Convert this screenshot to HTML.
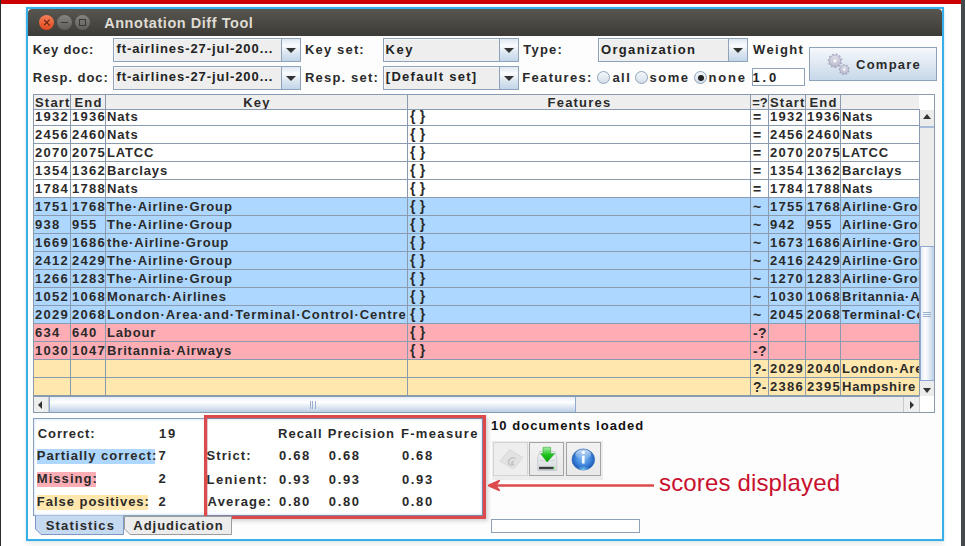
<!DOCTYPE html>
<html><head><meta charset="utf-8">
<style>
*{box-sizing:border-box;margin:0;padding:0}
html,body{width:965px;height:546px;overflow:hidden;background:#fff;position:relative;font-family:"Liberation Sans",sans-serif}
.a{position:absolute}
.t{position:absolute;white-space:pre;font-family:"Liberation Sans",sans-serif;line-height:1}
.combo{position:absolute;height:24px;border:1px solid #8ea3ba;background:#eeeeee;box-shadow:inset 1px 1px 0 #f8fafc}
.combo .arr{position:absolute;right:0;top:0;width:19px;height:22px;border-left:1px solid #8ea3ba;background:linear-gradient(#dfe8f2,#f9fbfd 30%,#dde7f1 60%,#c2d5e9)}
.combo .arr:after{content:"";position:absolute;left:3.5px;top:9px;border-left:5px solid transparent;border-right:5px solid transparent;border-top:5px solid #333}
.hdr .h{position:absolute;top:0;height:15px;border-right:1px solid #8a9bb0;border-bottom:1px solid #8a9bb0;text-align:center;font-size:13px;font-weight:bold;color:#2a2a2a;letter-spacing:1.2px;text-indent:1px;line-height:15px;white-space:pre}
.row{position:absolute;left:0;width:885px;height:18px;border-bottom:1px solid #8a9bb0;background:#fff}
.row.b{background:#add7ff}.row.p{background:#ffadb5}.row.y{background:#ffe7ad}
.row span{position:absolute;top:0;height:17px;border-right:1px solid #8a9bb0;padding-left:1px;font-size:13px;font-weight:bold;color:#2a2a2a;letter-spacing:0.75px;line-height:18px;white-space:pre;overflow:hidden}
.row .c1,.row .c2,.row .c6,.row .c7{letter-spacing:1.3px}
.row .c4{letter-spacing:4.3px;padding-left:2px;font-size:14px;line-height:16.5px}
.row .c3{letter-spacing:0.85px}
.row .c5{font-size:14px;line-height:19px;padding-left:2px;letter-spacing:0.3px}
.c1{left:0;width:37px}.c2{left:37px;width:35px}.c3{left:72px;width:302px}.c4{left:374px;width:343px}.c5{left:717px;width:18px}.c6{left:735px;width:37px}.c7{left:772px;width:35px}.row .c8{left:807px;width:120px;border-right:0}
.radio{width:13px;height:13px;border-radius:50%;border:1px solid #8ea3ba;background:linear-gradient(#f4f7fa,#d3deea)}
</style></head><body>
<div class="a" style="left:1px;top:0;width:960px;height:4px;background:#cc0000"></div>
<div class="a" style="left:961px;top:0;width:4px;height:546px;background:#45494b"></div>
<div class="a" style="left:0;top:0;width:1px;height:546px;background:#2a2e31"></div>

<div class="a" style="left:26px;top:7px;width:918px;height:534px;border:2px solid #3aaee6;background:#fdfdfd;box-shadow:0 0 1px #9dd8f5,0 4px 5px rgba(0,0,0,0.07)"></div>
<div class="a" style="left:28px;top:9px;width:914px;height:27px;background:linear-gradient(#58564f,#3c3b37);border-radius:4px 4px 0 0"></div>
<div class="a" style="left:39px;top:15px;width:15px;height:15px;border-radius:50%;background:linear-gradient(#f47e58,#e04a1e)"></div>
<div class="a" style="left:43px;top:22px;width:7.5px;height:1.2px;background:#5a2010;transform:rotate(45deg)"></div>
<div class="a" style="left:43px;top:22px;width:7.5px;height:1.2px;background:#5a2010;transform:rotate(-45deg)"></div>
<div class="a" style="left:57px;top:15px;width:15px;height:15px;border-radius:50%;background:linear-gradient(#85847f,#5e5d59)"></div>
<div class="a" style="left:61px;top:22px;width:7px;height:1px;background:#3a3935"></div>
<div class="a" style="left:75px;top:15px;width:15px;height:15px;border-radius:50%;background:linear-gradient(#85847f,#5e5d59)"></div>
<div class="a" style="left:79px;top:19px;width:7px;height:7px;border:1px solid #3a3935"></div>
<div class="t" style="left:104.2px;top:15.7px;font-size:14.5px;font-weight:700;letter-spacing:0.55px;color:#dfdbd2;">Annotation Diff Tool</div>

<div class="t" style="left:32.8px;top:42.9px;font-size:13px;font-weight:700;letter-spacing:0.82px;color:#2a2a2a;">Key doc:</div>
<div class="t" style="left:32.8px;top:71.1px;font-size:13px;font-weight:700;letter-spacing:0.96px;color:#2a2a2a;">Resp. doc:</div>
<div class="combo" style="left:113px;top:38px;width:188px"><div class="arr"></div></div>
<div class="combo" style="left:113px;top:66px;width:188px"><div class="arr"></div></div>
<div class="t" style="left:116.4px;top:42.1px;font-size:13px;font-weight:700;letter-spacing:0.93px;color:#222;">ft-airlines-27-jul-200...</div>
<div class="t" style="left:116.4px;top:70.1px;font-size:13px;font-weight:700;letter-spacing:0.93px;color:#222">ft-airlines-27-jul-200...</div>
<div class="t" style="left:305.0px;top:43.3px;font-size:13px;font-weight:700;letter-spacing:1.16px;color:#2a2a2a;">Key set:</div>
<div class="t" style="left:305.0px;top:71.2px;font-size:13px;font-weight:700;letter-spacing:1.18px;color:#2a2a2a;">Resp. set:</div>
<div class="combo" style="left:383px;top:38px;width:136px"><div class="arr"></div></div>
<div class="combo" style="left:383px;top:66px;width:136px"><div class="arr"></div></div>
<div class="t" style="left:385.5px;top:42.9px;font-size:13px;font-weight:700;letter-spacing:1.55px;color:#222;">Key</div>
<div class="t" style="left:385.8px;top:70.0px;font-size:13px;font-weight:700;letter-spacing:1.27px;color:#222">[Default set]</div>
<div class="t" style="left:523.3px;top:43.3px;font-size:13px;font-weight:700;letter-spacing:1.2px;color:#2a2a2a;">Type:</div>
<div class="t" style="left:522.3px;top:71.2px;font-size:13px;font-weight:700;letter-spacing:1.31px;color:#2a2a2a;">Features:</div>
<div class="combo" style="left:598px;top:38px;width:150px"><div class="arr"></div></div>
<div class="t" style="left:601.1px;top:42.9px;font-size:13px;font-weight:700;letter-spacing:1.3px;color:#222;">Organization</div>

<div class="a radio" style="left:597px;top:71px"></div>
<div class="t" style="left:612.4px;top:70.8px;font-size:13px;font-weight:700;letter-spacing:1.45px;color:#2a2a2a">all</div>
<div class="a radio" style="left:635px;top:71px"></div>
<div class="t" style="left:649.6px;top:70.8px;font-size:13px;font-weight:700;letter-spacing:1.45px;color:#2a2a2a">some</div>
<div class="a radio" style="left:694px;top:71px"><div class="a" style="left:2.5px;top:2.5px;width:6px;height:6px;border-radius:50%;background:#222"></div></div>
<div class="t" style="left:708.4px;top:70.8px;font-size:13px;font-weight:700;letter-spacing:1.88px;color:#2a2a2a">none</div>
<div class="t" style="left:753.0px;top:42.5px;font-size:13px;font-weight:700;letter-spacing:1.35px;color:#2a2a2a;">Weight</div>
<div class="a" style="left:752px;top:68px;width:53px;height:18px;border:1px solid #8ea3ba;background:#fff"></div>
<div class="t" style="left:752.5px;top:70.8px;font-size:13px;font-weight:700;letter-spacing:2.8px;color:#222;">1.0</div>
<div class="a" style="left:809px;top:47px;width:128px;height:34px;border:1px solid #8ea3ba;background:linear-gradient(#f6f8fb,#dfe8f2 50%,#c6d8ea)"></div>
<svg class="a" style="left:822px;top:48px" width="34" height="32" viewBox="822 48 34 32">
<defs><radialGradient id="gg" cx="50%" cy="40%" r="60%"><stop offset="0" stop-color="#f2f2f8"/><stop offset="1" stop-color="#a9a9c0"/></radialGradient></defs>
<path d="M848.22,70.41 L849.16,71.16 L848.73,72.16 L847.54,71.98 L846.75,72.81 L847.00,73.98 L846.02,74.47 L845.23,73.57 L844.10,73.70 L843.52,74.76 L842.47,74.50 L842.44,73.30 L841.49,72.67 L840.37,73.12 L839.72,72.24 L840.47,71.30 L840.15,70.21 L839.01,69.83 L839.07,68.75 L840.25,68.51 L840.70,67.46 L840.07,66.44 L840.82,65.65 L841.88,66.22 L842.90,65.71 L843.07,64.52 L844.15,64.40 L844.59,65.52 L845.70,65.78 L846.60,64.99 L847.50,65.59 L847.12,66.72 L847.80,67.64 L849.00,67.61 L849.31,68.65 L848.29,69.28Z" fill="url(#gg)" stroke="#9898b2" stroke-width="0.6"/>
<circle cx="844.2" cy="69.6" r="1.8" fill="#f6f6fb" stroke="#a8a8c0" stroke-width="0.5"/>
<path d="M840.49,61.91 L841.72,62.77 L841.28,63.89 L839.80,63.69 L839.02,64.70 L839.58,66.09 L838.61,66.79 L837.47,65.83 L836.27,66.25 L836.00,67.73 L834.80,67.80 L834.36,66.36 L833.12,66.07 L832.09,67.17 L831.05,66.58 L831.45,65.13 L830.57,64.22 L829.11,64.58 L828.55,63.52 L829.67,62.53 L829.42,61.28 L828.00,60.80 L828.10,59.61 L829.58,59.38 L830.05,58.19 L829.11,57.02 L829.84,56.07 L831.21,56.67 L832.25,55.92 L832.09,54.43 L833.22,54.03 L834.05,55.28 L835.32,55.21 L836.00,53.87 L837.16,54.14 L837.18,55.64 L838.29,56.27 L839.58,55.51 L840.42,56.37 L839.62,57.64 L840.22,58.77 L841.72,58.83 L841.95,60.00 L840.60,60.64Z" fill="url(#gg)" stroke="#9898b2" stroke-width="0.6"/>
<circle cx="835" cy="60.8" r="2.4" fill="#f6f6fb" stroke="#a8a8c0" stroke-width="0.6"/>
</svg>
<div class="t" style="left:856.0px;top:57.9px;font-size:13px;font-weight:700;letter-spacing:1.25px;color:#2a2a2a;">Compare</div>

<div class="a" style="left:33px;top:94px;width:902px;height:319px;border:1px solid #8a9bb0;background:#fff"></div>
<div class="a hdr" style="left:34px;top:95px;width:885px;height:15px;background:#eeeeee">
<span class="h" style="left:0;width:37px">Start</span><span class="h" style="left:37px;width:35px">End</span><span class="h" style="left:72px;width:302px">Key</span><span class="h" style="left:374px;width:343px">Features</span><span class="h" style="left:717px;width:18px;letter-spacing:0">=?</span><span class="h" style="left:735px;width:37px">Start</span><span class="h" style="left:772px;width:35px">End</span><span class="h" style="left:807px;width:78px;border-right:0"></span>
</div>
<div class="a" style="left:34px;top:110px;width:885px;height:286px;overflow:hidden">
<div class="row w" style="top:-2px"><span class="c1">1932</span><span class="c2">1936</span><span class="c3">Nats</span><span class="c4">{}</span><span class="c5">=</span><span class="c6">1932</span><span class="c7">1936</span><span class="c8">Nats</span></div>
<div class="row w" style="top:16px"><span class="c1">2456</span><span class="c2">2460</span><span class="c3">Nats</span><span class="c4">{}</span><span class="c5">=</span><span class="c6">2456</span><span class="c7">2460</span><span class="c8">Nats</span></div>
<div class="row w" style="top:34px"><span class="c1">2070</span><span class="c2">2075</span><span class="c3">LATCC</span><span class="c4">{}</span><span class="c5">=</span><span class="c6">2070</span><span class="c7">2075</span><span class="c8">LATCC</span></div>
<div class="row w" style="top:52px"><span class="c1">1354</span><span class="c2">1362</span><span class="c3">Barclays</span><span class="c4">{}</span><span class="c5">=</span><span class="c6">1354</span><span class="c7">1362</span><span class="c8">Barclays</span></div>
<div class="row w" style="top:70px"><span class="c1">1784</span><span class="c2">1788</span><span class="c3">Nats</span><span class="c4">{}</span><span class="c5">=</span><span class="c6">1784</span><span class="c7">1788</span><span class="c8">Nats</span></div>
<div class="row b" style="top:88px"><span class="c1">1751</span><span class="c2">1768</span><span class="c3">The·Airline·Group</span><span class="c4">{}</span><span class="c5">~</span><span class="c6">1755</span><span class="c7">1768</span><span class="c8">Airline·Group</span></div>
<div class="row b" style="top:106px"><span class="c1">938</span><span class="c2">955</span><span class="c3">The·Airline·Group</span><span class="c4">{}</span><span class="c5">~</span><span class="c6">942</span><span class="c7">955</span><span class="c8">Airline·Group</span></div>
<div class="row b" style="top:124px"><span class="c1">1669</span><span class="c2">1686</span><span class="c3">the·Airline·Group</span><span class="c4">{}</span><span class="c5">~</span><span class="c6">1673</span><span class="c7">1686</span><span class="c8">Airline·Group</span></div>
<div class="row b" style="top:142px"><span class="c1">2412</span><span class="c2">2429</span><span class="c3">The·Airline·Group</span><span class="c4">{}</span><span class="c5">~</span><span class="c6">2416</span><span class="c7">2429</span><span class="c8">Airline·Group</span></div>
<div class="row b" style="top:160px"><span class="c1">1266</span><span class="c2">1283</span><span class="c3">The·Airline·Group</span><span class="c4">{}</span><span class="c5">~</span><span class="c6">1270</span><span class="c7">1283</span><span class="c8">Airline·Group</span></div>
<div class="row b" style="top:178px"><span class="c1">1052</span><span class="c2">1068</span><span class="c3">Monarch·Airlines</span><span class="c4">{}</span><span class="c5">~</span><span class="c6">1030</span><span class="c7">1068</span><span class="c8">Britannia·Airways</span></div>
<div class="row b" style="top:196px"><span class="c1">2029</span><span class="c2">2068</span><span class="c3"><i style='font-style:normal;letter-spacing:0.97px'>London·Area·and·Terminal·Control·Centre</i></span><span class="c4">{}</span><span class="c5">~</span><span class="c6">2045</span><span class="c7">2068</span><span class="c8">Terminal·Control</span></div>
<div class="row p" style="top:214px"><span class="c1">634</span><span class="c2">640</span><span class="c3">Labour</span><span class="c4">{}</span><span class="c5">-?</span><span class="c6"></span><span class="c7"></span><span class="c8"></span></div>
<div class="row p" style="top:232px"><span class="c1">1030</span><span class="c2">1047</span><span class="c3">Britannia·Airways</span><span class="c4">{}</span><span class="c5">-?</span><span class="c6"></span><span class="c7"></span><span class="c8"></span></div>
<div class="row y" style="top:250px"><span class="c1"></span><span class="c2"></span><span class="c3"></span><span class="c4"></span><span class="c5">?-</span><span class="c6">2029</span><span class="c7">2040</span><span class="c8">London·Area</span></div>
<div class="row y" style="top:268px"><span class="c1"></span><span class="c2"></span><span class="c3"></span><span class="c4"></span><span class="c5">?-</span><span class="c6">2386</span><span class="c7">2395</span><span class="c8">Hampshire</span></div>
</div>
<div class="a" style="left:919px;top:109px;width:1px;height:287px;background:#8a9bb0"></div>
<div class="a" style="left:34px;top:109px;width:885px;height:1px;background:#8a9bb0"></div>
<div class="a" style="left:920px;top:110px;width:14px;height:286px;background:#ececec"></div>
<div class="a" style="left:923px;top:114px;border-left:4px solid transparent;border-right:4px solid transparent;border-bottom:5px solid #333"></div>
<div class="a" style="left:920px;top:126px;width:14px;height:2px;background:#a8bcd8"></div>
<div class="a" style="left:920px;top:246px;width:14px;height:135px;border-top:1px solid #8fa9d4;border-left:1px solid #8fa9d4;border-bottom:1px solid #8fa9d4;background:linear-gradient(90deg,#e6edf6,#ffffff 35%,#bccfe6)"></div>
<div class="a" style="left:923px;top:312px;width:8px;height:5px;border-top:1px solid #9bb0d0;border-bottom:1px solid #9bb0d0"></div>
<div class="a" style="left:923px;top:314px;width:8px;height:1px;background:#9bb0d0"></div>
<div class="a" style="left:923px;top:388px;border-left:4px solid transparent;border-right:4px solid transparent;border-top:5px solid #333"></div>
<div class="a" style="left:34px;top:396px;width:885px;height:16px;background:#ececec;border-top:1px solid #8a9bb0"></div>
<div class="a" style="left:34px;top:397px;width:15px;height:15px;background:#eeeeee;border-right:1px solid #c8c8c8"></div>
<div class="a" style="left:38px;top:401px;border-top:4px solid transparent;border-bottom:4px solid transparent;border-right:4px solid #333"></div>
<div class="a" style="left:49px;top:397px;width:527px;height:15px;border-left:1px solid #8fa9d4;border-right:1px solid #8fa9d4;background:linear-gradient(#e6edf6,#ffffff 35%,#bccfe6)"></div>
<div class="a" style="left:310px;top:401px;width:6px;height:8px;border-left:1px solid #9bb0d0;border-right:1px solid #9bb0d0"></div>
<div class="a" style="left:312px;top:401px;width:1px;height:8px;background:#9bb0d0"></div>
<div class="a" style="left:903px;top:397px;width:16px;height:15px;background:#eeeeee;border-left:1px solid #c8c8c8"></div>
<div class="a" style="left:910px;top:401px;border-top:4px solid transparent;border-bottom:4px solid transparent;border-left:4px solid #333"></div>
<div class="a" style="left:919px;top:396px;width:15px;height:16px;background:#fff;border-left:1px solid #c8c8c8"></div>

<div class="a" style="left:33px;top:418px;width:450px;height:98px;border:1px solid #8aa0c0;background:#fff;box-shadow:inset 0 0 3px #bcd6f2"></div>
<div class="a" style="left:37px;top:449px;width:118px;height:15px;background:#add7ff"></div>
<div class="a" style="left:37px;top:472px;width:59px;height:15px;background:#ffadb5"></div>
<div class="a" style="left:37px;top:495px;width:111px;height:15px;background:#ffe7ad"></div>
<div class="t" style="left:37.8px;top:426.7px;font-size:13px;font-weight:700;letter-spacing:0.89px;color:#2a2a2a;">Correct:</div>
<div class="t" style="left:36.8px;top:449.3px;font-size:13px;font-weight:700;letter-spacing:1.0px;color:#2a2a2a;">Partially correct:</div>
<div class="t" style="left:36.8px;top:471.9px;font-size:13px;font-weight:700;letter-spacing:1.05px;color:#2a2a2a;">Missing:</div>
<div class="t" style="left:36.8px;top:495.4px;font-size:13px;font-weight:700;letter-spacing:0.97px;color:#2a2a2a;">False positives:</div>
<div class="t" style="left:159.1px;top:426.7px;font-size:13px;font-weight:700;letter-spacing:3.45px;color:#2a2a2a"><span style="letter-spacing:1.6px">19</span></div>
<div class="t" style="left:158.6px;top:449.3px;font-size:13px;font-weight:700;letter-spacing:3.45px;color:#2a2a2a">7</div>
<div class="t" style="left:158.6px;top:471.9px;font-size:13px;font-weight:700;letter-spacing:3.45px;color:#2a2a2a">2</div>
<div class="t" style="left:158.6px;top:495.4px;font-size:13px;font-weight:700;letter-spacing:3.45px;color:#2a2a2a">2</div>
<div class="t" style="left:278.0px;top:426.7px;font-size:13px;font-weight:700;letter-spacing:1.05px;color:#2a2a2a;">Recall</div>
<div class="t" style="left:327.8px;top:426.7px;font-size:13px;font-weight:700;letter-spacing:0.95px;color:#2a2a2a;">Precision</div>
<div class="t" style="left:400.9px;top:426.7px;font-size:13px;font-weight:700;letter-spacing:1.34px;color:#2a2a2a;">F-measure</div>
<div class="t" style="left:206.6px;top:449.3px;font-size:13px;font-weight:700;letter-spacing:1.07px;color:#2a2a2a;">Strict:</div>
<div class="t" style="left:206.6px;top:472.8px;font-size:13px;font-weight:700;letter-spacing:1.38px;color:#2a2a2a;">Lenient:</div>
<div class="t" style="left:207.6px;top:495.4px;font-size:13px;font-weight:700;letter-spacing:1.16px;color:#2a2a2a;">Average:</div>
<div class="t" style="left:279.0px;top:449.3px;font-size:13px;font-weight:700;letter-spacing:1.65px;color:#2a2a2a;">0.68</div>
<div class="t" style="left:328.8px;top:449.3px;font-size:13px;font-weight:700;letter-spacing:1.65px;color:#2a2a2a">0.68</div>
<div class="t" style="left:401.9px;top:449.3px;font-size:13px;font-weight:700;letter-spacing:1.65px;color:#2a2a2a">0.68</div>
<div class="t" style="left:279.0px;top:472.8px;font-size:13px;font-weight:700;letter-spacing:1.65px;color:#2a2a2a">0.93</div>
<div class="t" style="left:328.8px;top:472.8px;font-size:13px;font-weight:700;letter-spacing:1.65px;color:#2a2a2a">0.93</div>
<div class="t" style="left:401.9px;top:472.8px;font-size:13px;font-weight:700;letter-spacing:1.65px;color:#2a2a2a">0.93</div>
<div class="t" style="left:279.0px;top:495.4px;font-size:13px;font-weight:700;letter-spacing:1.65px;color:#2a2a2a">0.80</div>
<div class="t" style="left:328.8px;top:495.4px;font-size:13px;font-weight:700;letter-spacing:1.65px;color:#2a2a2a">0.80</div>
<div class="t" style="left:401.9px;top:495.4px;font-size:13px;font-weight:700;letter-spacing:1.65px;color:#2a2a2a">0.80</div>
<div class="a" style="left:204px;top:415px;width:282px;height:104px;border:3px solid #dc4a4c;box-shadow:2px 2px 4px rgba(0,0,0,0.18),inset 0 0 0 1px rgba(120,40,60,0.25)"></div>

<svg class="a" style="left:28px;top:510px" width="210" height="30" viewBox="28 510 210 30">
<path d="M124.5 516.5H231.5V534.5H130L124.5 529Z" fill="#ececec" stroke="#9c9c9c" stroke-width="1"/>
<path d="M35.5 515.5V529L41 534.5H123.5V515.5" fill="#c5d9f1" stroke="#7b98c5" stroke-width="1"/>
</svg>

<div class="t" style="left:45.7px;top:519.0px;font-size:13px;font-weight:700;letter-spacing:1.16px;color:#2a2a2a;">Statistics</div>
<div class="t" style="left:133.3px;top:519.0px;font-size:13px;font-weight:700;letter-spacing:0.97px;color:#2a2a2a;">Adjudication</div>

<div class="t" style="left:490.9px;top:418.5px;font-size:13px;font-weight:700;letter-spacing:1.08px;color:#111;">10 documents loaded</div>
<div class="a" style="left:492px;top:441px;width:111px;height:39px;background:#ececec"></div>
<div class="a" style="left:493px;top:442px;width:35px;height:34px;border:1px solid #d4d4d4;background:#eeeeee"></div>
<div class="a" style="left:529px;top:442px;width:35px;height:34px;border:1px solid #a4a4a4;background:linear-gradient(#f2f2f2,#e8e8e8)"></div>
<div class="a" style="left:566px;top:442px;width:35px;height:34px;border:1px solid #a4a4a4;background:linear-gradient(#f2f2f2,#e8e8e8)"></div>
<svg class="a" style="left:494px;top:443px" width="34" height="33" viewBox="494 443 34 33">
<path d="M509.5 449.5L523 457.5L513.5 469L500 461Z" fill="#e2e2e2" stroke="#d6d6d6" stroke-width="0.8"/>
<path d="M515.5 459.2A4 3.3 -35 1 0 513.5 464.5L511.5 462.8L514 461" fill="none" stroke="#c4c4c4" stroke-width="1.5"/>
</svg>
<svg class="a" style="left:530px;top:443px" width="34" height="33" viewBox="530 443 34 33">
<defs><linearGradient id="dg" x1="0" y1="0" x2="0" y2="1"><stop offset="0" stop-color="#f4f6f8"/><stop offset="1" stop-color="#d4d8dc"/></linearGradient>
<linearGradient id="ag" x1="0" y1="0" x2="0" y2="1"><stop offset="0" stop-color="#a6f0a6"/><stop offset="0.5" stop-color="#22c422"/><stop offset="1" stop-color="#00a000"/></linearGradient></defs>
<path d="M539.5 451.5H554.8L556.8 458V470.5H537.7V458Z" fill="url(#dg)" stroke="#c2c6cc" stroke-width="0.8"/>
<path d="M539 460Q547 463 555 460" fill="none" stroke="#c8ccd2" stroke-width="0.8"/>
<rect x="539" y="466.8" width="15" height="2.4" fill="#3a3d42"/>
<rect x="553" y="467.2" width="1.6" height="1.6" fill="#44dd44"/>
<path d="M543 447.3H550.6V453.6H554.8L547.1 462L540.5 453.6H543Z" fill="url(#ag)" stroke="#1e9e1e" stroke-width="0.5"/>
</svg>
<svg class="a" style="left:566px;top:443px" width="35" height="33" viewBox="566 443 35 33">
<defs><radialGradient id="ig" cx="50%" cy="45%" r="55%"><stop offset="0" stop-color="#8cc0f4"/><stop offset="0.6" stop-color="#3f86dc"/><stop offset="1" stop-color="#1c56b0"/></radialGradient>
<linearGradient id="ih" x1="0" y1="0" x2="0" y2="1"><stop offset="0" stop-color="#ffffff" stop-opacity="0.75"/><stop offset="1" stop-color="#ffffff" stop-opacity="0"/></linearGradient>
<radialGradient id="ib" cx="50%" cy="100%" r="50%"><stop offset="0" stop-color="#8fe6ff" stop-opacity="0.9"/><stop offset="1" stop-color="#8fe6ff" stop-opacity="0"/></radialGradient></defs>
<ellipse cx="583.3" cy="459.5" rx="11.3" ry="10.6" fill="url(#ig)" stroke="#2a64b8" stroke-width="0.6"/>
<ellipse cx="583.3" cy="454.5" rx="8" ry="5" fill="url(#ih)"/>
<ellipse cx="583.3" cy="466" rx="7" ry="4" fill="url(#ib)"/>
<circle cx="583.3" cy="452.6" r="1.6" fill="#fff"/>
<path d="M582 455.8H584.6V463.5H582Z" fill="#fff" opacity="0.95"/>
</svg>
<div class="a" style="left:491px;top:519px;width:149px;height:14px;border:1px solid #8da2b8;background:#fff"></div>


<svg class="a" style="left:480px;top:474px" width="180" height="24" viewBox="480 474 180 24"><path d="M492 485.5H654" stroke="#dc4a4c" stroke-width="2.6"/><path d="M499 480.8L488.8 485.5L499 490.2L495 485.5Z" fill="#dc4a4c" stroke="#dc4a4c" stroke-width="2" stroke-linejoin="round"/></svg>
<div class="t" style="left:659.0px;top:471.1px;font-size:24px;font-weight:400;letter-spacing:0.15px;color:#c8102e;">scores displayed</div>
</body></html>
